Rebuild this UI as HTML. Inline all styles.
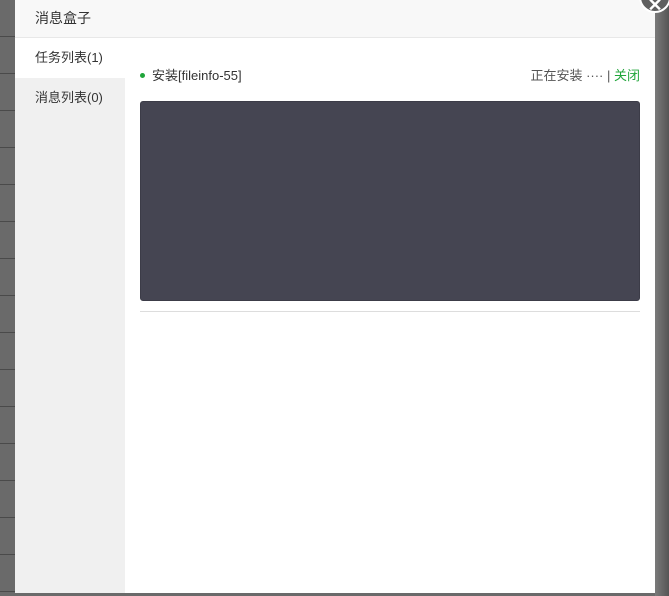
<!DOCTYPE html>
<html><head><meta charset="utf-8"><style>
*{margin:0;padding:0;box-sizing:border-box}
body{width:669px;height:596px;overflow:hidden;position:relative;background:#595959;font-family:"Liberation Sans","Noto Sans CJK SC",sans-serif;}
.bg{position:absolute;left:0;top:0;width:669px;height:596px;background:repeating-linear-gradient(to bottom,#6a6a6a 0,#6a6a6a 36px,#4a4a4a 36px,#4a4a4a 37px);}
.rg{position:absolute;right:0;top:0;width:14px;height:596px;background:linear-gradient(to right,#7a7a7a,#555);}
.modal{position:absolute;left:15px;top:0;width:640px;height:593px;background:#fff;}
.hd{height:38px;background:#f8f8f8;border-bottom:1px solid #e8e8e8;font-size:14px;color:#333;line-height:37px;padding-left:20px}
.side{position:absolute;left:0;top:38px;width:110px;bottom:0;background:#f0f0f0}
.side div{height:40px;line-height:40px;padding-left:20px;font-size:13px;color:#333}
.side .on{background:#fff}
.row{position:absolute;left:125px;top:67px;width:500px;font-size:13px;color:#333;line-height:18px}
.dot{display:inline-block;width:5px;height:5px;border-radius:50%;background:#20a53a;margin-right:7px;vertical-align:2px}
.r{position:absolute;right:0;top:0;color:#555}
.r span{color:#20a53a}
.panel{position:absolute;left:125px;top:101px;width:500px;height:200px;background:#454552;border-radius:3px;border:1px solid #3c3c48}
.line{position:absolute;left:125px;top:311px;width:500px;height:1px;background:#ddd}
.x{position:absolute;left:639px;top:-19px;width:32px;height:32px;border-radius:50%;background:#5f5f5f;border:2px solid #fff;color:#fff;font-size:18px;text-align:center;line-height:44px;font-weight:bold}
</style></head><body>
<div class="bg"></div><div class="rg"></div>
<div class="modal">
<div class="hd">消息盒子</div>
<div class="side"><div class="on">任务列表(1)</div><div>消息列表(0)</div></div>
<div class="row"><span class="dot"></span>安装[fileinfo-55]<div class="r">正在安装 ···· | <span>关闭</span></div></div>
<div class="panel"></div>
<div class="line"></div>
</div>
<div class="x">✕</div>
</body></html>
